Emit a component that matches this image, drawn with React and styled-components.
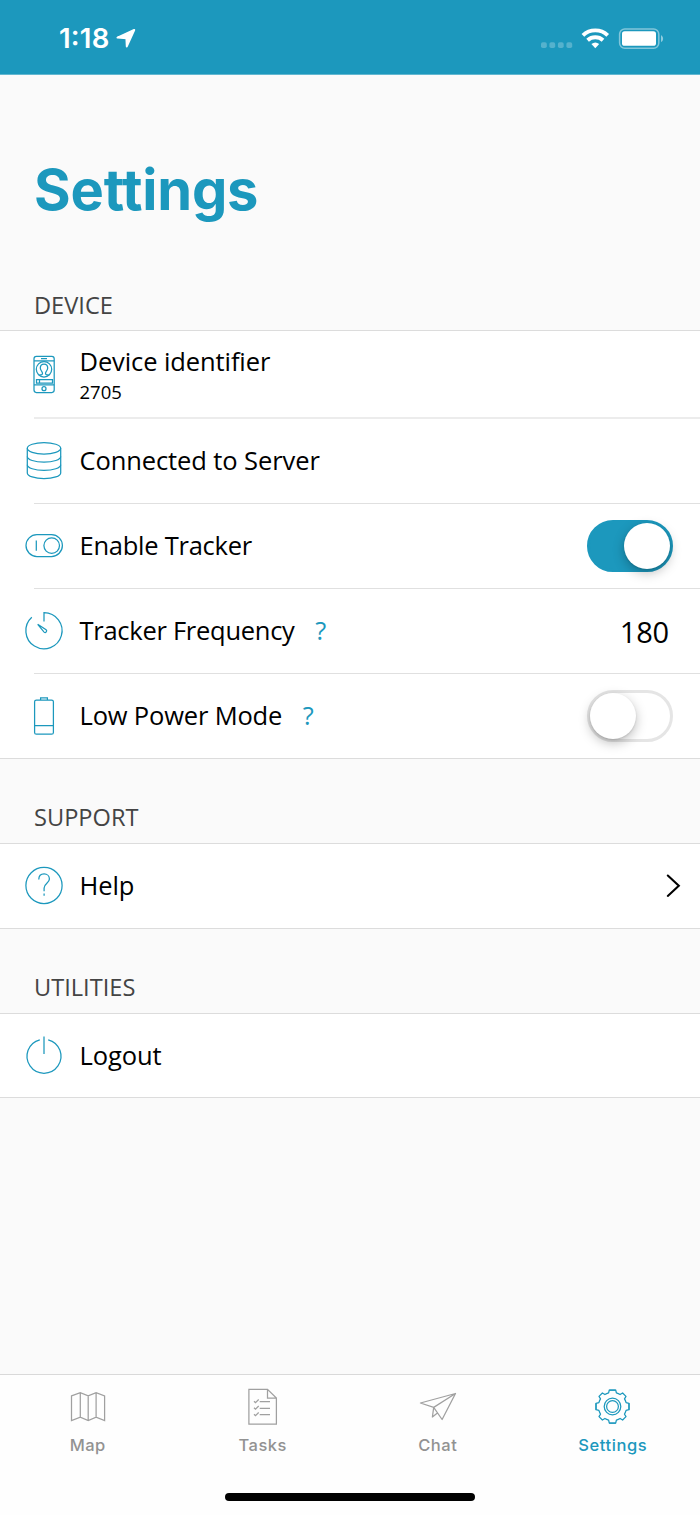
import React, { useState } from 'react'
import styled, { createGlobalStyle } from 'styled-components';

const BLUE = '#1c98bd'
const GREY = '#929292'

const GlobalStyle = createGlobalStyle`
  * {
    box-sizing: border-box;
  }
  body {
    margin: 0;
    background-color: #fafafa;
  }
`

const Screen = styled.div`
  width: 700px;
  height: 1515px;
  display: flex;
  flex-direction: column;
  background-color: #fafafa;
  color: #000;
  font-family: "Open Sans", "Noto Sans", sans-serif;
`

const StatusBar = styled.header`
  height: 75px;
  flex: none;
  display: flex;
  justify-content: space-between;
  align-items: flex-start;
  padding: 22px 36px 0 59px;
  background-color: ${BLUE};
  border-bottom: 1px solid #62b7d0;
`

const StatusGroup = styled.div`
  height: 32px;
  display: flex;
  align-items: center;
`

const Clock = styled.span`
  width: 56px;
  color: #fff;
  font: 600 27.5px/32px Inter, sans-serif;
  letter-spacing: 0.2px;
  font-feature-settings: "case";
`

const Title = styled.h1`
  margin: 79px 0 0 34px;
  height: 72px;
  flex: none;
  color: ${BLUE};
  font: 700 56px/72px Inter, sans-serif;
  letter-spacing: -0.2px;
`

const Content = styled.main`
  flex: 1;
`

const SectionTitle = styled.h2`
  height: ${props => props.$height}px;
  margin: 0;
  padding: 0 0 ${props => props.$bottom || 9}px 34px;
  display: flex;
  align-items: flex-end;
  color: #444;
  font-size: 23.6px;
  font-weight: 400;
  line-height: 34px;
`

const List = styled.section`
  border-top: 1px solid #dcdcdc;
  border-bottom: 1px solid #dcdcdc;
  background-color: #fff;
`

const Row = styled.div`
  height: ${props => props.$height || 84}px;
  display: flex;
  align-items: center;
  padding: 0 ${props => props.$right || 27}px 0 22px;
`

const Separator = styled.div`
  height: ${props => props.$thick ? 2 : 1}px;
  margin-left: 34px;
  background-color: ${props => props.$thick ? '#ececec' : '#e0e0e0'};
`

const Labels = styled.div`
  flex: 1;
  margin-left: 13.5px;
  padding-bottom: 2px;
`

const Label = styled.div`
  display: flex;
  font-size: 25.5px;
  line-height: 36px;
  letter-spacing: ${props => props.$tracking || -0.1}px;
`

const SubLabel = styled.div`
  margin: 1px 0 -1px;
  font-size: 18.5px;
  line-height: 24px;
`

const Hint = styled.span`
  margin-left: ${props => props.$gap}px;
  color: ${BLUE};
`

const Value = styled.span`
  margin-right: 4px;
  padding-top: 1px;
  font-size: 29px;
  line-height: 40px;
  letter-spacing: -0.2px;
`

const Switch = styled.button`
  width: 86px;
  height: 52px;
  display: flex;
  align-items: center;
  justify-content: ${props => props.$on ? 'flex-end' : 'flex-start'};
  padding: 0;
  border: 3px solid ${props => props.$on ? BLUE : '#e5e5e5'};
  border-radius: 26px;
  background-color: ${props => props.$on ? BLUE : '#fff'};
  cursor: pointer;
`

const Knob = styled.span`
  width: 46px;
  height: 46px;
  border-radius: 50%;
  background-color: #fff;
  box-shadow: 0 4px 12px rgba(0, 0, 0, 0.26), 0 1px 2px rgba(0, 0, 0, 0.12);
`

const Icon = styled.svg`
  width: 44px;
  height: 44px;
  flex: none;
  fill: none;
  stroke: currentColor;
  stroke-width: 1.25;
  color: ${props => props.$color || BLUE};
`

const TabBar = styled.nav`
  height: 141px;
  flex: none;
  display: flex;
  flex-direction: column;
  align-items: center;
  background-color: #fefefe;
  border-top: 1px solid #d9d9d9;
`

const Tabs = styled.div`
  width: 100%;
  height: 118px;
  display: flex;
`

const Tab = styled.div`
  flex: 1;
  display: flex;
  flex-direction: column;
  align-items: center;
  padding-top: 10px;
  color: ${props => props.$active ? BLUE : GREY};
  font: 500 16.5px/20px Inter, sans-serif;
  letter-spacing: ${props => props.$active ? 0.6 : 0.5}px;
`

const TabLabel = styled.span`
  margin-top: 6px;
  padding-left: 0.5px;
`

const HomeIndicator = styled.div`
  width: 250px;
  height: 8px;
  border-radius: 4px;
  background-color: #000;
`

const LocationArrow = () => (
  <svg width="22" height="20" viewBox="-1 0 22 20" fill="#fff" stroke="#fff" strokeWidth="2" strokeLinejoin="round">
    <path d="M18.2 2 1.5 9.6 10.4 10.2 10.8 18.4Z" />
  </svg>
)

const StatusIcons = () => (
  <svg width="124" height="24" viewBox="0 0 124 24">
    <g fill="#fff" fillOpacity="0.25">
      <rect x="1" y="16.2" width="5.8" height="5.8" rx="1.8" />
      <rect x="9.4" y="16.2" width="5.8" height="5.8" rx="1.8" />
      <rect x="17.9" y="16.2" width="5.8" height="5.8" rx="1.8" />
      <rect x="26.4" y="16.2" width="5.8" height="5.8" rx="1.8" />
    </g>
    <g fill="none" stroke="#fff" strokeWidth="3.9">
      <path d="M42.9 9.3a18 18 0 0 1 24.8 0" />
      <path d="M47.6 14.2a11.5 11.5 0 0 1 15.4 0" />
    </g>
    <path d="M51.4 18.1a6 6 0 0 1 7.8 0L55.3 22.2Z" fill="#fff" />
    <rect x="79.6" y="2.9" width="39.2" height="19.4" rx="5.2" fill="none" stroke="#fff" strokeOpacity="0.45" strokeWidth="1.5" />
    <rect x="82" y="5.2" width="34" height="14.6" rx="2.6" fill="#fff" />
    <path d="M121 9.2c2.8 1.2 2.8 5.6 0 6.8Z" fill="#fff" fillOpacity="0.5" />
  </svg>
)

const DeviceIcon = () => (
  <Icon viewBox="0 0 44 44">
    <rect x="12" y="4.3" width="20.2" height="36.2" rx="2.4" />
    <path d="M12 8.8h20.2M12 32.9h20.2M19 6.5h6" />
    <circle cx="22" cy="17.3" r="7.7" />
    <path d="M17.3 22.8h1.9c1.4 0 1.5-1.4 1-2.6-.6-1.3-1.9-2.3-1.9-4.2 0-2.3 1.5-4 3.7-4s3.7 1.7 3.7 4c0 1.9-1.3 2.9-1.9 4.2-.5 1.2-.4 2.6 1 2.6h1.9" />
    <path d="M14.5 27.6h16v3.4h-16zM17.5 27.6v3.4" />
    <circle cx="22" cy="36.7" r="2" />
  </Icon>
)

const ServerIcon = () => (
  <Icon viewBox="0 0 44 44">
    <ellipse cx="22" cy="9.3" rx="16.7" ry="5.7" />
    <path d="M5.3 9.3v24.6a16.7 5.7 0 0 0 33.4 0V9.3" />
    <path d="M5.3 17.5a16.7 5.7 0 0 0 33.4 0M5.3 25.7a16.7 5.7 0 0 0 33.4 0" />
  </Icon>
)

const ToggleIcon = () => (
  <Icon viewBox="0 0 44 44">
    <rect x="4" y="10.7" width="36.4" height="21.8" rx="10.9" />
    <circle cx="29.7" cy="21.6" r="7.8" />
    <path d="M14.3 16.5v10.2" />
  </Icon>
)

const TimerIcon = () => (
  <Icon viewBox="0 0 44 44">
    <path d="M22 12.5V3.6A18.1 18.1 0 1 1 9.8 8.3" />
    <path d="M15.7 15.3l8.4 5.5a1.5 1.5 0 0 1-2 2.3z" />
  </Icon>
)

const BatteryIcon = () => (
  <Icon viewBox="0 0 44 44">
    <rect x="12.6" y="6" width="18.8" height="34.2" rx="1.8" />
    <path d="M18.6 6V3.8h6.8V6M12.6 31.7h18.8" />
  </Icon>
)

const HelpIcon = () => (
  <Icon viewBox="0 0 44 44">
    <circle cx="22" cy="21.5" r="18.1" />
    <path d="M16.8 15.6c0-3.6 2.2-5.7 5.3-5.7s5.3 2.2 5.3 5c0 4.3-5.3 4.4-5.3 9.2v3.1M22.1 29.6v2.2" />
  </Icon>
)

const PowerIcon = () => (
  <Icon viewBox="0 0 44 44">
    <path d="M22 2.5v17.4M26.2 5.8a17 17 0 1 1-8.4 0" />
  </Icon>
)

const Chevron = () => (
  <svg width="16" height="26" viewBox="0 0 16 26" fill="none" stroke="#000" strokeWidth="2.1" strokeLinecap="round">
    <path d="M2.8 2.5 13.8 12.7 2.8 22.9" />
  </svg>
)

const MapIcon = ({ color }) => (
  <Icon viewBox="0.5 0 44 44" $color={color}>
    <path d="M6 10.9 14.8 7.6 22.7 10.9 30.6 7.6 39.1 10.9V35.6L30.6 32.1 22.7 35.6 14.8 32.1 6 35.6ZM14.8 7.6V32.1M22.7 10.9V35.6M30.6 7.6V32.1" />
  </Icon>
)

const TasksIcon = ({ color }) => (
  <Icon viewBox="0.8 0 44 44" $color={color}>
    <path d="M8.7 4.3h18.6l8.9 8.7v26.2H8.7zM27.3 4.3V13h8.9" />
    <path d="M19.5 16.7h10.3M19.5 23.3h10.3M19.5 29.7h10.3" />
    <path d="M13.8 16.2l1.5 1.5 3.2-3.2M13.8 22.7l1.5 1.5 3.2-3.2M13.8 29.2l1.5 1.5 3.2-3.2" />
  </Icon>
)

const ChatIcon = ({ color }) => (
  <Icon viewBox="0.5 0 44 44" $color={color} strokeLinejoin="round">
    <path d="M4.9 18 40 8.5 26.6 34.5 18.2 22.4ZM18.2 22.4 40 8.5M18.2 22.4 16.9 32 21.6 28.2" />
  </Icon>
)

const GearIcon = ({ color }) => {
  const quarter = 'M-3.2-16.5H3.2L3.9-13.6Q5.9-13 7.6-12L10.1-13.5 13.5-10.1 12-7.6Q13-5.9 13.6-3.9L16.5-3.2V3.2'
  return (
    <Icon viewBox="0.8 0 44 44" $color={color} strokeLinejoin="round">
      <g transform="translate(22.3 21.5)">
        {[0, 90, 180, 270].map(angle => <path key={angle} d={quarter} transform={`rotate(${angle})`} />)}
        <circle r="8.3" />
        <circle r="5.9" />
      </g>
    </Icon>
  )
}

const tabs = [
  { name: 'Map', Glyph: MapIcon },
  { name: 'Tasks', Glyph: TasksIcon },
  { name: 'Chat', Glyph: ChatIcon },
  { name: 'Settings', Glyph: GearIcon },
]

const Toggle = ({ on, label, onClick }) => (
  <Switch type="button" role="switch" aria-checked={on} aria-label={label} $on={on} onClick={onClick}>
    <Knob />
  </Switch>
)

export default function App() {

  const [tracker, setTracker] = useState(true);
  const [lowPower, setLowPower] = useState(false);

  return (
    <>
      <GlobalStyle />
      <Screen>
        <StatusBar>
          <StatusGroup>
            <Clock>1:18</Clock>
            <LocationArrow />
          </StatusGroup>
          <StatusGroup>
            <StatusIcons />
          </StatusGroup>
        </StatusBar>

        <Title>Settings</Title>

        <Content>
          <SectionTitle $height={104} $bottom={8}>DEVICE</SectionTitle>
          <List>
            <Row $height={86}>
              <DeviceIcon />
              <Labels>
                <Label>Device identifier</Label>
                <SubLabel>2705</SubLabel>
              </Labels>
            </Row>
            <Separator $thick />
            <Row>
              <ServerIcon />
              <Labels><Label>Connected to Server</Label></Labels>
            </Row>
            <Separator />
            <Row>
              <ToggleIcon />
              <Labels><Label $tracking={-0.25}>Enable Tracker</Label></Labels>
              <Toggle label="Enable Tracker" on={tracker} onClick={() => setTracker(!tracker)} />
            </Row>
            <Separator />
            <Row>
              <TimerIcon />
              <Labels><Label $tracking={-0.27}>Tracker Frequency<Hint $gap={20.5}>?</Hint></Label></Labels>
              <Value>180</Value>
            </Row>
            <Separator />
            <Row>
              <BatteryIcon />
              <Labels><Label $tracking={-0.17}>Low Power Mode<Hint $gap={20.5}>?</Hint></Label></Labels>
              <Toggle label="Low Power Mode" on={lowPower} onClick={() => setLowPower(!lowPower)} />
            </Row>
          </List>

          <SectionTitle $height={84}>SUPPORT</SectionTitle>
          <List>
            <Row $right={19}>
              <HelpIcon />
              <Labels><Label>Help</Label></Labels>
              <Chevron />
            </Row>
          </List>

          <SectionTitle $height={84}>UTILITIES</SectionTitle>
          <List>
            <Row $height={83}>
              <PowerIcon />
              <Labels><Label>Logout</Label></Labels>
            </Row>
          </List>
        </Content>

        <TabBar>
          <Tabs>
            {tabs.map(({ name, Glyph }) => {
              const active = name === 'Settings'
              return (
                <Tab key={name} $active={active}>
                  <Glyph color={active ? BLUE : '#a0a0a0'} />
                  <TabLabel>{name}</TabLabel>
                </Tab>
              )
            })}
          </Tabs>
          <HomeIndicator />
        </TabBar>
      </Screen>
    </>
  )
}
